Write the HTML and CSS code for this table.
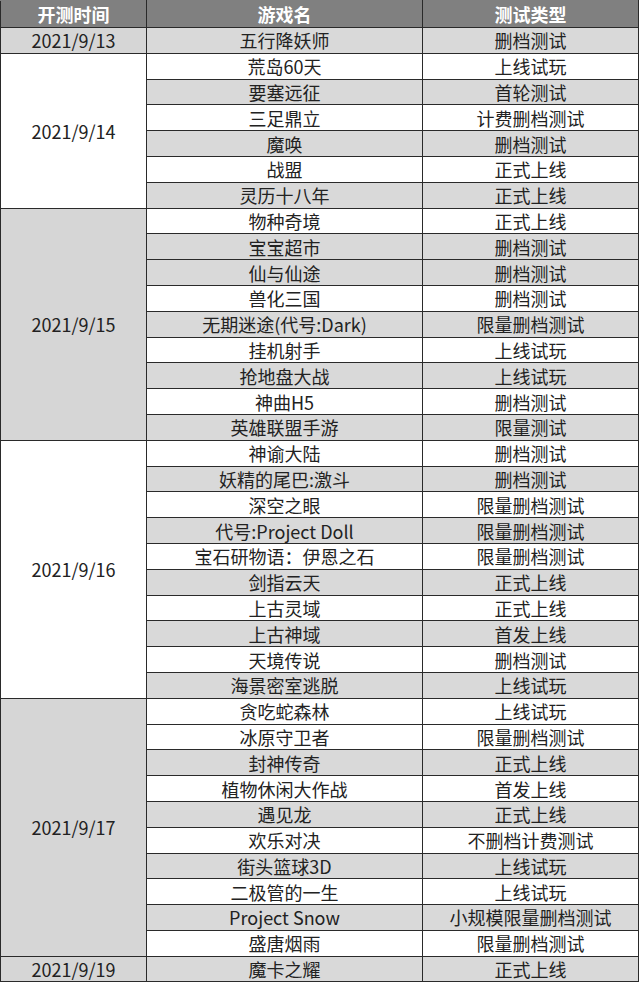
FILE: index.html
```html
<!DOCTYPE html>
<html lang="zh-CN">
<head>
<meta charset="utf-8">
<title>开测表</title>
<link rel="stylesheet" href="styles.css">
</head>
<body>
<table class="schedule">
  <colgroup>
    <col class="c-date">
    <col class="c-name">
    <col class="c-type">
  </colgroup>
  <thead>
    <tr class="head"><th>开测时间</th><th>游戏名</th><th>测试类型</th></tr>
  </thead>
  <tbody>
    <tr class="g"><td class="date g">2021/9/13</td><td>五行降妖师</td><td>删档测试</td></tr>

    <tr><td class="date" rowspan="6">2021/9/14</td><td>荒岛60天</td><td>上线试玩</td></tr>
    <tr class="g"><td>要塞远征</td><td>首轮测试</td></tr>
    <tr><td>三足鼎立</td><td>计费删档测试</td></tr>
    <tr class="g"><td>魔唤</td><td>删档测试</td></tr>
    <tr><td>战盟</td><td>正式上线</td></tr>
    <tr class="g"><td>灵历十八年</td><td>正式上线</td></tr>

    <tr><td class="date g" rowspan="9">2021/9/15</td><td>物种奇境</td><td>正式上线</td></tr>
    <tr class="g"><td>宝宝超市</td><td>删档测试</td></tr>
    <tr class="g"><td>仙与仙途</td><td>删档测试</td></tr>
    <tr><td>兽化三国</td><td>删档测试</td></tr>
    <tr class="g"><td>无期迷途(代号:Dark)</td><td>限量删档测试</td></tr>
    <tr><td>挂机射手</td><td>上线试玩</td></tr>
    <tr class="g"><td>抢地盘大战</td><td>上线试玩</td></tr>
    <tr><td>神曲H5</td><td>删档测试</td></tr>
    <tr class="g"><td>英雄联盟手游</td><td>限量测试</td></tr>

    <tr><td class="date" rowspan="10">2021/9/16</td><td>神谕大陆</td><td>删档测试</td></tr>
    <tr class="g"><td>妖精的尾巴:激斗</td><td>删档测试</td></tr>
    <tr><td>深空之眼</td><td>限量删档测试</td></tr>
    <tr class="g"><td>代号:Project Doll</td><td>限量删档测试</td></tr>
    <tr><td>宝石研物语：伊恩之石</td><td>限量删档测试</td></tr>
    <tr class="g"><td>剑指云天</td><td>正式上线</td></tr>
    <tr><td>上古灵域</td><td>正式上线</td></tr>
    <tr class="g"><td>上古神域</td><td>首发上线</td></tr>
    <tr><td>天境传说</td><td>删档测试</td></tr>
    <tr class="g"><td>海景密室逃脱</td><td>上线试玩</td></tr>

    <tr><td class="date g" rowspan="10">2021/9/17</td><td>贪吃蛇森林</td><td>上线试玩</td></tr>
    <tr><td>冰原守卫者</td><td>限量删档测试</td></tr>
    <tr class="g"><td>封神传奇</td><td>正式上线</td></tr>
    <tr><td>植物休闲大作战</td><td>首发上线</td></tr>
    <tr class="g"><td>遇见龙</td><td>正式上线</td></tr>
    <tr><td>欢乐对决</td><td>不删档计费测试</td></tr>
    <tr class="g"><td>街头篮球3D</td><td>上线试玩</td></tr>
    <tr><td>二极管的一生</td><td>上线试玩</td></tr>
    <tr class="g"><td>Project Snow</td><td>小规模限量删档测试</td></tr>
    <tr><td>盛唐烟雨</td><td>限量删档测试</td></tr>

    <tr class="g"><td class="date g">2021/9/19</td><td>魔卡之耀</td><td>正式上线</td></tr>
  </tbody>
</table>
</body>
</html>
```

FILE: styles.css
```css
html, body {
  margin: 0;
  padding: 0;
  background: #ffffff;
}

.schedule {
  border-collapse: collapse;
  table-layout: fixed;
  width: 638px;
  font-family: "Noto Sans CJK SC", "Noto Sans", sans-serif;
  font-size: 18px;
  color: #222222;
}

.c-date { width: 146px; }
.c-name { width: 276px; }
.c-type { width: 216px; }

.schedule th,
.schedule td {
  border: 1px solid #2a2a2a;
  padding: 0;
  text-align: center;
  vertical-align: middle;
  line-height: 22px;
  white-space: nowrap;
  overflow: hidden;
  background: #ffffff;
}

.schedule .head th {
  height: 26px;
  background: #808080;
  color: #ffffff;
  font-weight: 700;
  border-top-color: #808080;
}

.schedule tbody td {
  height: 24.8px;
}

.schedule tr.g td,
.schedule td.g {
  background: #d9d9d9;
}

.schedule td.date {
  background: #ffffff;
}

.schedule td.date.g {
  background: #d6d6d6;
}
```
